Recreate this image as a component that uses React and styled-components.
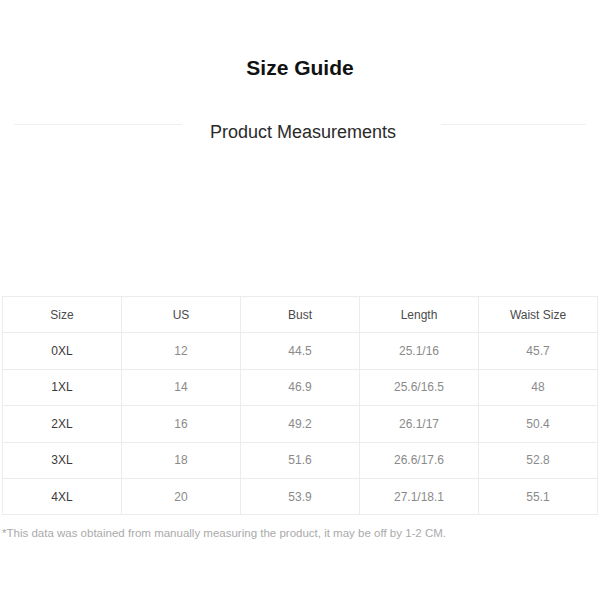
import React from "react";
import styled, { createGlobalStyle } from "styled-components";

const Global = createGlobalStyle`
  html, body { margin: 0; padding: 0; background: #fff; }
  body { font-family: "Liberation Sans", Arial, sans-serif; }
`;

const Page = styled.div`
  width: 600px;
  height: 600px;
  box-sizing: border-box;
  padding: 56px 2px 0;
`;

const Title = styled.h1`
  margin: 0;
  font-size: 21px;
  line-height: 24px;
  font-weight: 700;
  color: #111;
  text-align: center;
`;

const SubRow = styled.div`
  margin-top: 40px;
  display: flex;
  justify-content: center;
  align-items: flex-start;
`;

const Line = styled.div`
  width: ${(p) => p.$w}px;
  height: 1px;
  margin-top: 4px;
  background: #efefef;
`;

const SubTitle = styled.h2`
  margin: 0 ${(p) => p.$r}px 0 ${(p) => p.$l}px;
  font-size: 18px;
  line-height: 24px;
  font-weight: 400;
  color: #2a2a2a;
  white-space: nowrap;
`;

const Table = styled.table`
  margin-top: 152px;
  width: 596px;
  border-collapse: collapse;
  table-layout: fixed;
  border: 1px solid #ececec;
`;

const Cell = styled.td`
  height: 35.4px;
  padding: 0;
  border: 1px solid #ececec;
  text-align: center;
  font-size: 12px;
  color: ${(p) => (p.$head ? "#4a4a4a" : p.$first ? "#3a3a3a" : "#8a8a8a")};
`;

const Note = styled.p`
  margin: 11px 0 0;
  font-size: 11.5px;
  line-height: 14px;
  color: #aaa;
`;

const headers = ["Size", "US", "Bust", "Length", "Waist Size"];
const rows = [
  ["0XL", "12", "44.5", "25.1/16", "45.7"],
  ["1XL", "14", "46.9", "25.6/16.5", "48"],
  ["2XL", "16", "49.2", "26.1/17", "50.4"],
  ["3XL", "18", "51.6", "26.6/17.6", "52.8"],
  ["4XL", "20", "53.9", "27.1/18.1", "55.1"],
];

export default function App() {
  return (
    <>
      <Global />
      <Page>
        <Title>Size Guide</Title>
        <SubRow>
          <Line $w={168} />
          <SubTitle $l={28} $r={45}>Product Measurements</SubTitle>
          <Line $w={145} />
        </SubRow>
        <Table>
          <tbody>
            <tr>
              {headers.map((h) => (
                <Cell key={h} $head>{h}</Cell>
              ))}
            </tr>
            {rows.map((r) => (
              <tr key={r[0]}>
                {r.map((c, i) => (
                  <Cell key={i} $first={i === 0}>{c}</Cell>
                ))}
              </tr>
            ))}
          </tbody>
        </Table>
        <Note>*This data was obtained from manually measuring the product, it may be off by 1-2 CM.</Note>
      </Page>
    </>
  );
}
